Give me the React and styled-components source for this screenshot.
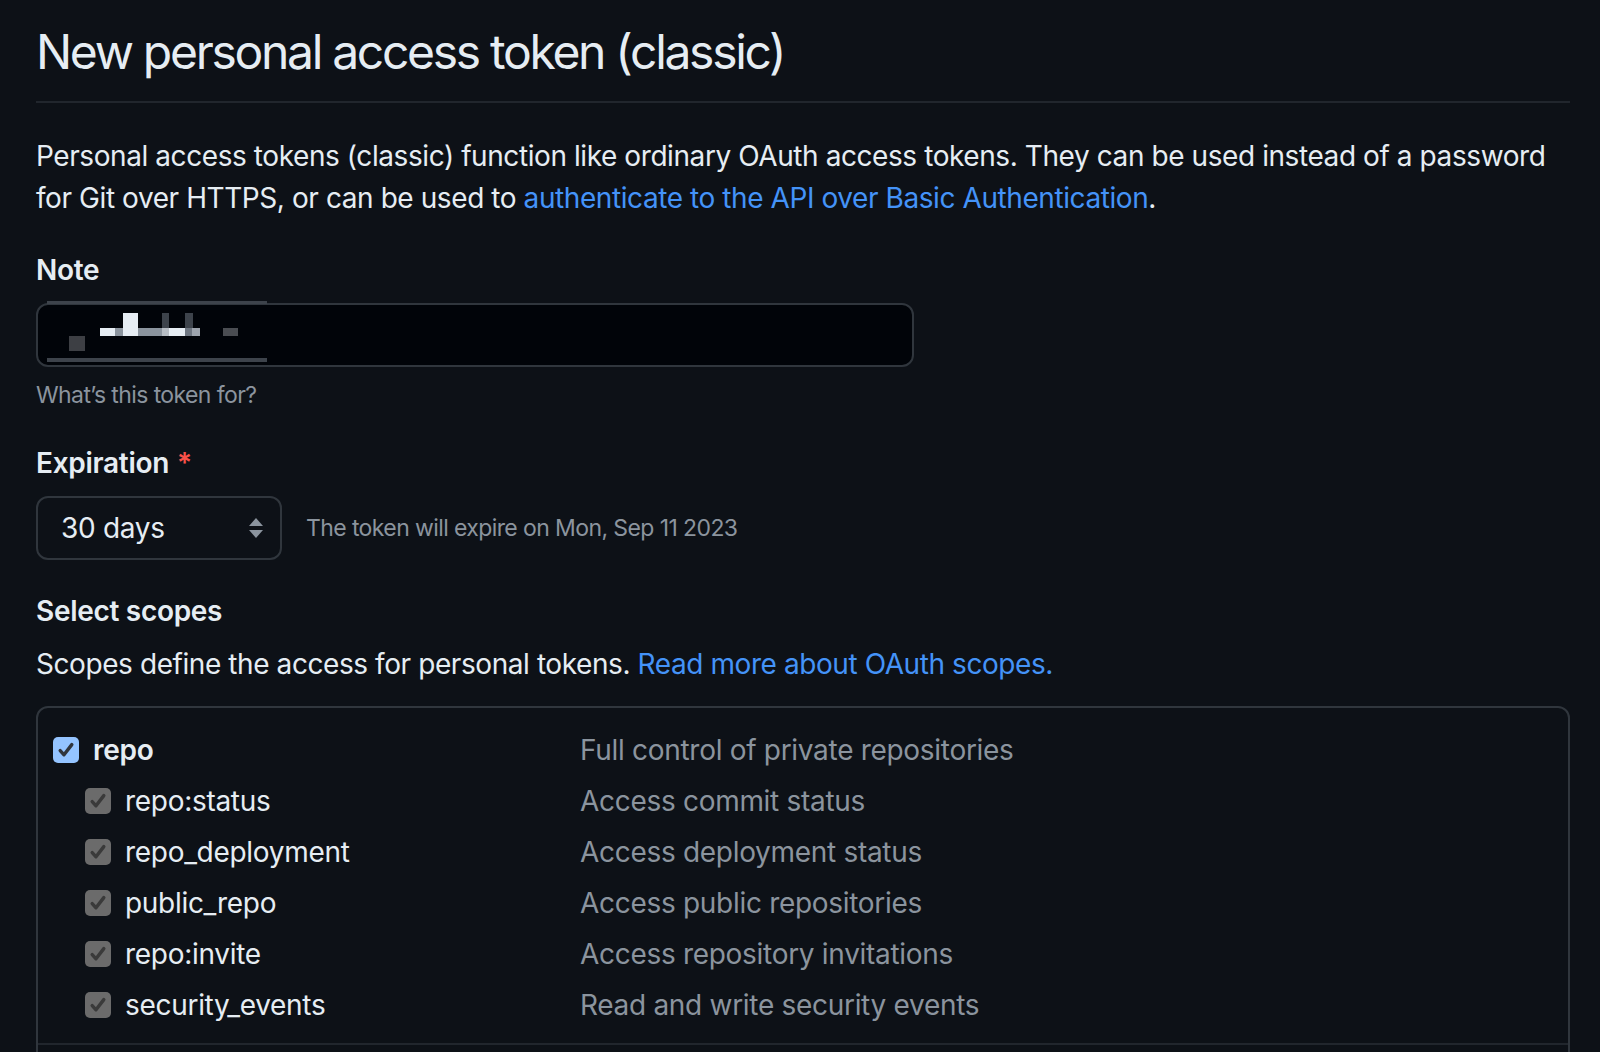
import React from 'react';
import styled, { createGlobalStyle } from 'styled-components';

const GlobalStyle = createGlobalStyle`
  html, body {
    margin: 0;
    padding: 0;
    background: #0d1117;
    overflow: hidden;
  }
  body {
    font-family: Inter, "Liberation Sans", "Noto Sans", sans-serif;
    color: #e6edf3;
    letter-spacing: -0.3px;
    -webkit-font-smoothing: antialiased;
  }
  * { box-sizing: border-box; }
`;

const Page = styled.main`
  padding: 16px 30px 0 36px;
`;

const Subhead = styled.div`
  padding-bottom: 13px;
  border-bottom: 2px solid #21262d;
`;

const Title = styled.h2`
  margin: 0;
  font-size: 48px;
  line-height: 72px;
  font-weight: 400;
  letter-spacing: -2.3px;
`;

const Intro = styled.p`
  margin: 32px 0 0;
  font-size: 28px;
  line-height: 42px;
  letter-spacing: -0.42px;
`;

const Link = styled.a`
  color: #4493f8;
  text-decoration: none;
`;

const FormGroup = styled.div`
  margin-top: ${p => p.$top || 30}px;
`;

const Label = styled.label`
  display: block;
  font-size: 28px;
  line-height: 42px;
  font-weight: 600;
  margin-bottom: 12px;
`;

const Required = styled.span`
  color: #f85149;
  margin-left: 8px;
`;

const InputBox = styled.div`
  position: relative;
  width: 878px;
  height: 64px;
  border: 2px solid #30363d;
  border-radius: 12px;
  background: #010409;
`;

const Mosaic = styled.svg`
  position: absolute;
  left: 9px;
  top: -4px;
`;

const Note = styled.p`
  margin: 10px 0 0;
  font-size: 23px;
  line-height: 36px;
  letter-spacing: -0.6px;
  color: #8b949e;
`;

const InlineRow = styled.div`
  display: flex;
  align-items: center;
  gap: 24px;
`;

const Select = styled.div`
  width: 246px;
  height: 64px;
  border: 2px solid #30363d;
  border-radius: 12px;
  background: #0d1117;
  padding: 0 16px 0 23px;
  display: flex;
  align-items: center;
  justify-content: space-between;
  font-size: 28px;
`;

const Hint = styled.span`
  font-size: 23px;
  letter-spacing: -0.6px;
  color: #8b949e;
`;

const SectionTitle = styled.h3`
  margin: 30px 0 0;
  font-size: 28px;
  line-height: 42px;
  font-weight: 600;
`;

const SectionText = styled.p`
  margin: 11px 0 0;
  font-size: 28px;
  line-height: 42px;
  letter-spacing: -0.42px;
`;

const ScopeBox = styled.div`
  margin-top: 21px;
  border: 2px solid #30363d;
  border-radius: 12px;
`;

const ScopeGroup = styled.div`
  padding: 16px 15px 13px;
  border-bottom: 2px solid #21262d;
`;

const ScopeRow = styled.div`
  display: grid;
  grid-template-columns: 527px 1fr;
  align-items: center;
  height: 51px;
`;

const ScopeLabel = styled.div`
  display: flex;
  align-items: center;
  gap: 14px;
  padding-left: ${p => (p.$child ? 32 : 0)}px;
  font-size: 28px;
  font-weight: ${p => (p.$child ? 400 : 600)};
`;

const ScopeDesc = styled.span`
  font-size: 28px;
  color: #8b949e;
`;

const Box = styled.span`
  width: 26px;
  height: 26px;
  border-radius: 5px;
  flex: none;
  display: flex;
  align-items: center;
  justify-content: center;
  background: ${p => (p.$primary ? '#94c4ff' : '#6b6b6b')};
  color: ${p => (p.$primary ? '#30353c' : '#3a3a3a')};
`;

const Checkbox = ({ primary }) => (
  <Box $primary={primary}>
    <svg width="18" height="18" viewBox="0 0 18 18">
      <path d="M3.2 9.6 L7 13.8 L14.8 3.6" fill="none" stroke="currentColor" strokeWidth="3.4" strokeLinecap="round" strokeLinejoin="round" />
    </svg>
  </Box>
);

const Arrows = () => (
  <svg width="16" height="24" viewBox="0 0 16 24">
    <path d="M8 2 L15 10 H1 Z" fill="#8b949e" />
    <path d="M8 22 L15 14 H1 Z" fill="#8b949e" />
  </svg>
);

// pixelated (redacted) note value
const Redacted = () => (
  <Mosaic width="222" height="64" viewBox="0 0 222 64">
    <rect x="0" y="0" width="220" height="3" fill="#3d434b" />
    <rect x="0" y="57" width="220" height="4" fill="#3d434b" />
    <rect x="76" y="12" width="15" height="23" fill="#e6edf3" />
    <rect x="53" y="27" width="15" height="8" fill="#e6edf3" />
    <rect x="68" y="27" width="8" height="8" fill="#8b949e" />
    <rect x="91" y="27" width="24" height="8" fill="#8b949e" />
    <rect x="115" y="12" width="7" height="15" fill="#3d434b" />
    <rect x="115" y="27" width="7" height="8" fill="#b7bdc4" />
    <rect x="122" y="27" width="16" height="8" fill="#e6edf3" />
    <rect x="138" y="12" width="8" height="15" fill="#3d434b" />
    <rect x="138" y="27" width="7" height="8" fill="#6e7681" />
    <rect x="145" y="27" width="8" height="8" fill="#9da4ad" />
    <rect x="22" y="35" width="16" height="15" fill="#3d3f44" />
    <rect x="176" y="27" width="15" height="8" fill="#4a4d52" />
  </Mosaic>
);

const scopes = [
  { name: 'repo', desc: 'Full control of private repositories', primary: true },
  { name: 'repo:status', desc: 'Access commit status' },
  { name: 'repo_deployment', desc: 'Access deployment status' },
  { name: 'public_repo', desc: 'Access public repositories' },
  { name: 'repo:invite', desc: 'Access repository invitations' },
  { name: 'security_events', desc: 'Read and write security events' },
];

export default function App() {
  return (
    <>
      <GlobalStyle />
      <Page>
        <Subhead>
          <Title>New personal access token (classic)</Title>
        </Subhead>
        <Intro>
          Personal access tokens (classic) function like ordinary OAuth access tokens. They can be used instead of a password
          for Git over HTTPS, or can be used to <Link href="#">authenticate to the API over Basic Authentication</Link>.
        </Intro>

        <FormGroup $top={30}>
          <Label>Note</Label>
          <InputBox>
            <Redacted />
          </InputBox>
          <Note>What’s this token for?</Note>
        </FormGroup>

        <FormGroup $top={29}>
          <Label>
            Expiration<Required>*</Required>
          </Label>
          <InlineRow>
            <Select>
              <span>30 days</span>
              <Arrows />
            </Select>
            <Hint>The token will expire on Mon, Sep 11 2023</Hint>
          </InlineRow>
        </FormGroup>

        <SectionTitle>Select scopes</SectionTitle>
        <SectionText>
          Scopes define the access for personal tokens. <Link href="#">Read more about OAuth scopes.</Link>
        </SectionText>

        <ScopeBox>
          <ScopeGroup>
            {scopes.map(s => (
              <ScopeRow key={s.name}>
                <ScopeLabel $child={!s.primary}>
                  <Checkbox primary={s.primary} />
                  {s.name}
                </ScopeLabel>
                <ScopeDesc>{s.desc}</ScopeDesc>
              </ScopeRow>
            ))}
          </ScopeGroup>
          <ScopeGroup>
            <ScopeRow>
              <ScopeLabel>
                <Checkbox />
                workflow
              </ScopeLabel>
              <ScopeDesc>Update GitHub Action workflows</ScopeDesc>
            </ScopeRow>
          </ScopeGroup>
        </ScopeBox>
      </Page>
    </>
  );
}
